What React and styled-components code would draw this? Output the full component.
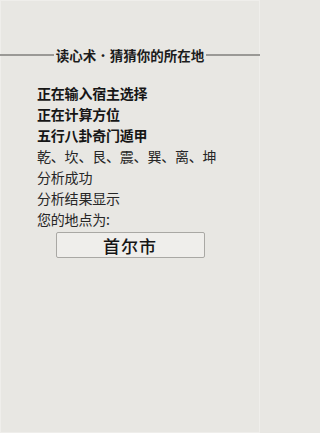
import React from "react";
import styled, { createGlobalStyle } from "styled-components";

const GlobalStyle = createGlobalStyle`
  html, body {
    margin: 0;
    padding: 0;
    background: #e8e7e3;
  }
  body {
    font-family: "Noto Sans CJK SC", "Noto Sans", sans-serif;
  }
`;

const steps = [
  { text: "正在输入宿主选择", strong: true },
  { text: "正在计算方位", strong: true },
  { text: "五行八卦奇门遁甲", strong: true },
  { text: "乾、坎、艮、震、巽、离、坤" },
  { text: "分析成功" },
  { text: "分析结果显示" },
  { text: "您的地点为:" },
];

export default function App() {
  return (
    <Page>
      <GlobalStyle />
      <TitleRow>
        <Rule />
        <Title>
          读心术<Dot>•</Dot>猜猜你的所在地
        </Title>
        <Rule />
      </TitleRow>
      <StepList>
        {steps.map((s) => (
          <Step key={s.text} $strong={s.strong}>
            {s.text}
          </Step>
        ))}
      </StepList>
      <ResultBox>首尔市</ResultBox>
    </Page>
  );
}

const Page = styled.div`
  box-sizing: border-box;
  width: 260px;
  min-height: 433px;
  padding-top: 46px;
  background: #e8e7e3;
  border: 1px solid #efeeeb;
  display: flex;
  flex-direction: column;
`;

const TitleRow = styled.div`
  display: flex;
  align-items: center;
  height: 16px;
  margin: 0 -1px;
`;

const Rule = styled.div`
  flex: 1;
  height: 2px;
  background: #9a9996;
`;

const Title = styled.h1`
  display: flex;
  align-items: center;
  margin: 0 2px;
  font-size: 13.5px;
  line-height: 16px;
  font-weight: 700;
  color: #1c1c1c;
  white-space: nowrap;
`;

const Dot = styled.span`
  display: inline-block;
  width: 13.5px;
  text-align: center;
  font-size: 11px;
`;

const StepList = styled.ul`
  list-style: none;
  margin: 20px 0 0;
  padding: 0 0 0 36px;
`;

const Step = styled.li`
  font-size: 14px;
  line-height: 21px;
  letter-spacing: -0.2px;
  font-weight: ${(p) => (p.$strong ? 600 : 400)};
  color: ${(p) => (p.$strong ? "#161616" : "#262626")};
  white-space: nowrap;
`;

const ResultBox = styled.div`
  box-sizing: border-box;
  align-self: center;
  width: 149px;
  height: 26px;
  margin-top: 2px;
  display: flex;
  align-items: center;
  justify-content: center;
  background: #efeeeb;
  border: 1px solid #a9a8a4;
  border-radius: 2px;
  font-size: 17px;
  font-weight: 500;
  color: #151515;
  letter-spacing: 1px;
`;
